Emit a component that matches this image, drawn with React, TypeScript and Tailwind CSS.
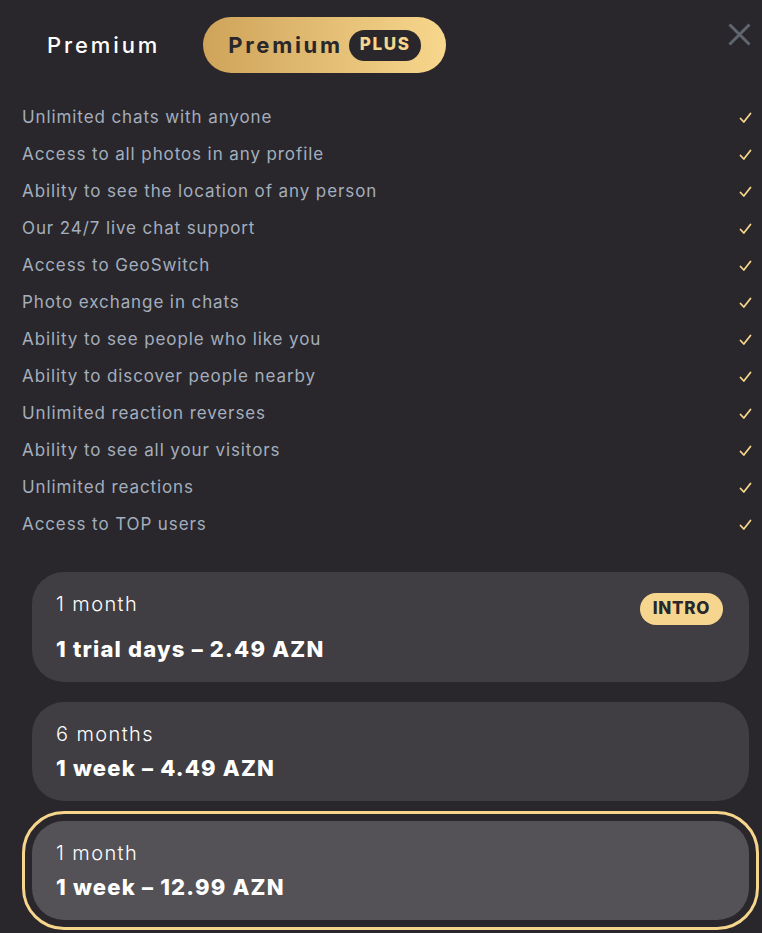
import React from "react";

const features = [
  "Unlimited chats with anyone",
  "Access to all photos in any profile",
  "Ability to see the location of any person",
  "Our 24/7 live chat support",
  "Access to GeoSwitch",
  "Photo exchange in chats",
  "Ability to see people who like you",
  "Ability to discover people nearby",
  "Unlimited reaction reverses",
  "Ability to see all your visitors",
  "Unlimited reactions",
  "Access to TOP users",
];

type Plan = { period: string; price: string; intro?: boolean; selected?: boolean };

const plans: Plan[] = [
  { period: "1 month", price: "1 trial days – 2.49 AZN", intro: true },
  { period: "6 months", price: "1 week – 4.49 AZN" },
  { period: "1 month", price: "1 week – 12.99 AZN", selected: true },
];

function Check() {
  return (
    <svg width="13" height="12" viewBox="0 0 13 12" fill="none" className="shrink-0">
      <path d="M1.5 6.5 L4.8 10 L11.5 1.5" stroke="#f6d58c" strokeWidth="1.8" strokeLinecap="round" strokeLinejoin="round" />
    </svg>
  );
}

function PlanCard({ plan }: { plan: Plan }) {
  return (
    <div
      className={`rounded-[42px] border-[3px] p-[7px] ${
        plan.selected ? "border-[#f6d58c]" : "border-transparent"
      }`}
    >
      <div
        className={`rounded-[32px] pl-[24px] pr-[26px] pt-[20px] pb-[19px] ${
          plan.selected ? "bg-[#545256]" : "bg-[#403e42]"
        }`}
      >
        <div className="flex items-start justify-between">
          <div className="text-[20px] leading-[24px] font-light tracking-[1.4px] text-white">{plan.period}</div>
          {plan.intro && (
            <span className="mt-[1px] h-[32px] px-[13px] rounded-full bg-[#f6d68f] text-[#29272b] text-[17px] tracking-[0.7px] font-extrabold flex items-center">
              INTRO
            </span>
          )}
        </div>
        <div
          className={`text-[22px] leading-[28px] font-extrabold tracking-[1.2px] text-white ${
            plan.intro ? "mt-[10px]" : "mt-[8px]"
          }`}
        >
          {plan.price}
        </div>
      </div>
    </div>
  );
}

export default function App() {
  return (
    <div
      className="w-[762px] h-[933px] bg-[#29272b] overflow-hidden"
      style={{ fontFamily: "Inter, 'Noto Sans', sans-serif" }}
    >
      {/* Tabs */}
      <div className="flex items-start justify-between pl-[22px] pr-[11px] pt-[17px]">
        <div className="flex items-center">
          <button className="h-[56px] pl-[25px] pr-[24px] text-[22px] font-medium tracking-[2.9px] text-white">Premium</button>
          <button className="ml-[19px] h-[56px] pl-[25px] pr-[25px] rounded-full bg-gradient-to-r from-[#cfa35a] to-[#f7d78d] flex items-center gap-[6px]">
            <span className="text-[22px] font-bold tracking-[2.7px] text-[#29272b]">Premium</span>
            <span className="h-[31px] px-[11px] rounded-full bg-[#29272b] text-[#f6d58c] text-[17px] tracking-[1.6px] font-extrabold flex items-center">
              PLUS
            </span>
          </button>
        </div>
        <svg width="23" height="23" viewBox="0 0 23 23" className="mt-[6px]">
          <path d="M1.5 1.5 L21.5 21.5 M21.5 1.5 L1.5 21.5" stroke="#5f6670" strokeWidth="3" />
        </svg>
      </div>

      {/* Features */}
      <ul className="mt-[26px] pl-[22px] pr-[10px]">
        {features.map((f) => (
          <li key={f} className="h-[37px] flex items-center justify-between">
            <span className="text-[17px] tracking-[0.9px] text-[#a4aebd]">{f}</span>
            <Check />
          </li>
        ))}
      </ul>

      {/* Plans */}
      <div className="mt-[19px] pl-[22px] pr-[3px]">
        {plans.map((p, i) => (
          <PlanCard key={i} plan={p} />
        ))}
      </div>
    </div>
  );
}
